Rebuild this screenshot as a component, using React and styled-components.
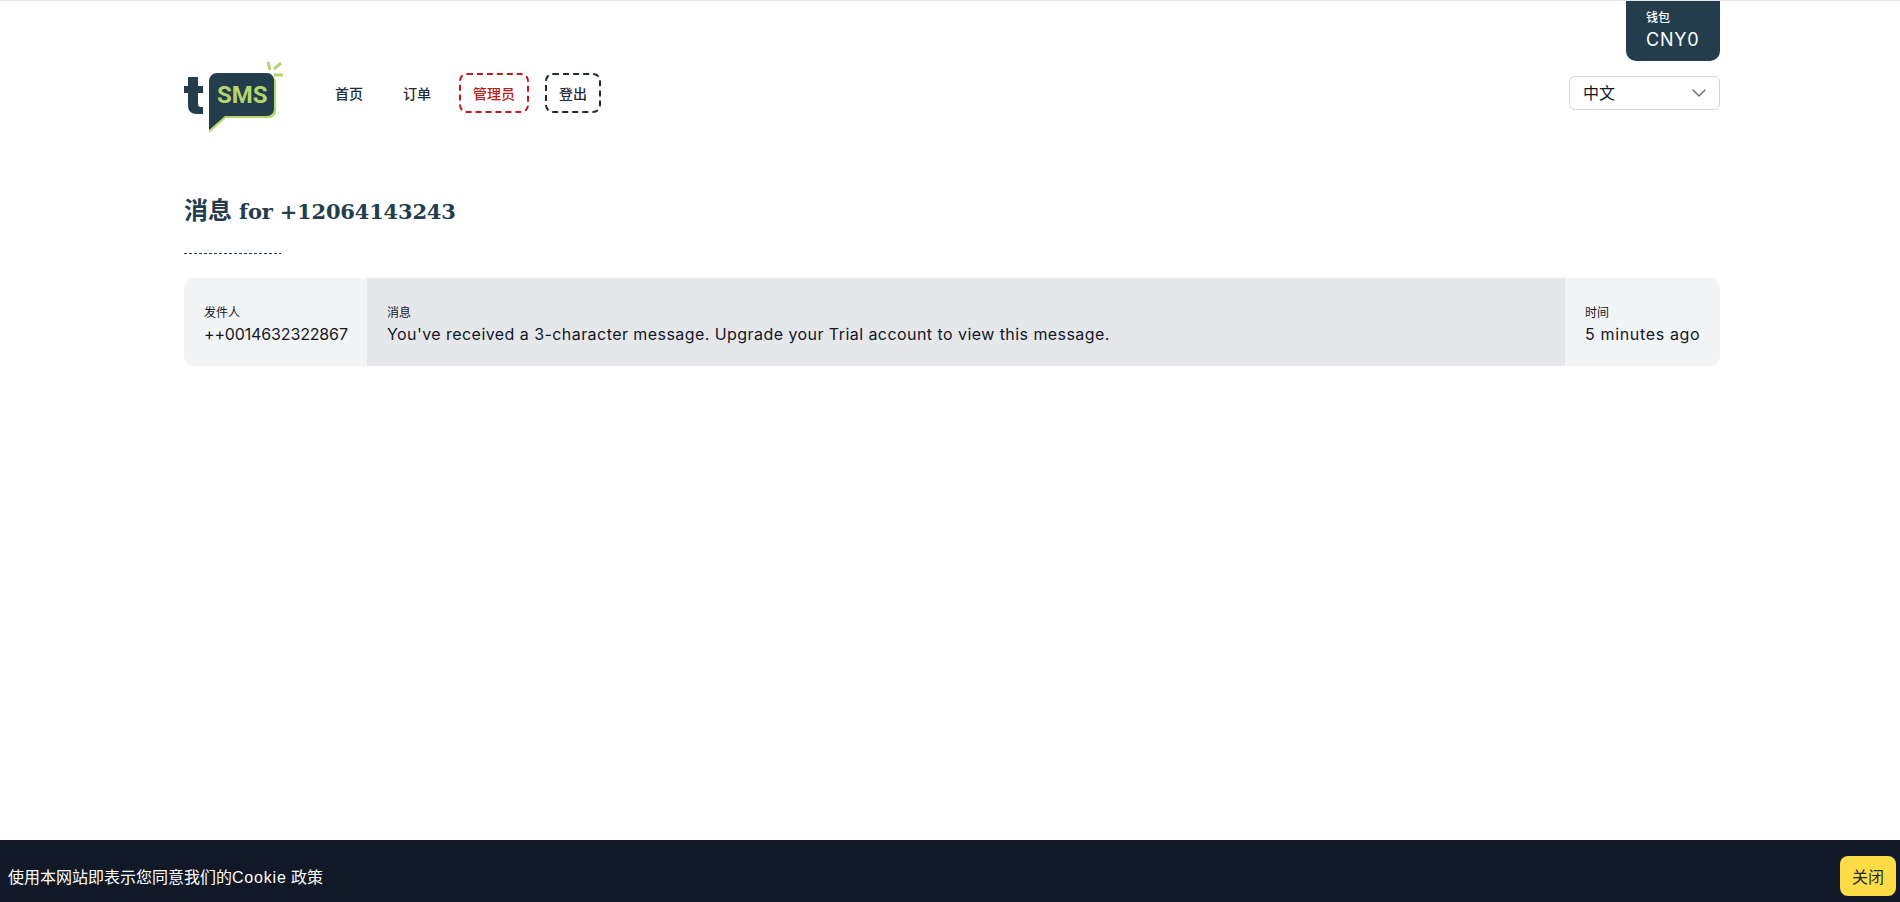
import React from 'react';
import styled, { createGlobalStyle } from 'styled-components';

const GlobalStyle = createGlobalStyle`
  html, body { margin: 0; padding: 0; background: #fff; }
  body {
    font-family: Inter, "Noto Sans CJK SC", sans-serif;
    color: #111827;
    border-top: 1px solid #e5e7eb;
  }
`;

const Page = styled.div`
  width: 1536px;
  margin-left: 184px;
`;

const WalletRow = styled.div`
  display: flex;
  justify-content: flex-end;
  height: 59px;
`;

const Wallet = styled.div`
  width: 94px;
  height: 60px;
  box-sizing: border-box;
  padding: 9px 20px;
  background: #233d4d;
  color: #fff;
  border-radius: 0 0 10px 10px;
`;

const WalletLabel = styled.div`
  font-size: 12px;
  line-height: 16px;
  font-weight: 500;
`;

const WalletValue = styled.div`
  font-size: 18px;
  line-height: 28px;
  letter-spacing: 0.8px;
`;

const Header = styled.header`
  display: flex;
  align-items: flex-start;
  justify-content: space-between;
  height: 72px;
`;

const Left = styled.div`
  display: flex;
  align-items: flex-start;
`;

const Nav = styled.nav`
  display: flex;
  align-items: center;
  gap: 16px;
  margin: 13px 0 0 39px;
`;

const NavLink = styled.a`
  box-sizing: border-box;
  height: 40px;
  display: flex;
  align-items: center;
  padding: 0 12px;
  font-size: 14px;
  font-weight: 500;
  border-radius: 8px;
  color: ${(p) => (p.$tone === 'red' ? '#bb1c1c' : '#1f2937')};
  border: ${(p) => (p.$tone === 'red' ? '2px dashed #bb1c1c' : p.$tone ? '2px dashed #1f2937' : '0')};
`;

const LangSelect = styled.div`
  width: 151px;
  height: 34px;
  box-sizing: border-box;
  margin-top: 16px;
  padding: 0 12px 2px 13px;
  display: flex;
  align-items: center;
  justify-content: space-between;
  border: 1px solid #d1d5db;
  border-radius: 6px;
  font-size: 16px;
  color: #111827;
`;

const Title = styled.h1`
  height: 32px;
  margin: 63px 0 0;
  font-family: "DejaVu Serif", "Noto Sans CJK SC", serif;
  font-size: 21px;
  line-height: 32px;
  font-weight: 700;
  letter-spacing: -0.2px;
  color: #233d4d;
`;

const TitleCjk = styled.span`
  font-size: 24px;
  letter-spacing: 0;
`;

const Rule = styled.div`
  width: 97px;
  height: 1px;
  margin-top: 26px;
  background: repeating-linear-gradient(90deg, #233d4d 0 3px, transparent 3px 5px);
`;

const Table = styled.div`
  display: grid;
  grid-template-columns: 183px 1fr 155px;
  height: 88px;
  margin-top: 24px;
  border-radius: 10px;
  overflow: hidden;
`;

const Cell = styled.div`
  padding: 27px 20px 0;
  background: ${(p) => (p.$dark ? '#e5e7eb' : '#f3f4f6')};
`;

const CellLabel = styled.div`
  font-size: 12px;
  line-height: 16px;
  margin-bottom: 1px;
`;

const CellValue = styled.div`
  font-size: 16px;
  line-height: 24px;
  white-space: nowrap;
  letter-spacing: ${(p) => p.$spacing}px;
`;

const CookieBar = styled.div`
  position: fixed;
  left: 0;
  right: 0;
  bottom: 0;
  height: 62px;
  box-sizing: border-box;
  padding: 16px 4px 6px 8px;
  display: flex;
  align-items: center;
  justify-content: space-between;
  background: #111827;
  color: #fff;
  font-family: "Liberation Sans", "Noto Sans CJK SC", sans-serif;
  font-size: 16px;
`;

const CookieWord = styled.span`
  letter-spacing: 0.8px;
`;

const CloseButton = styled.button`
  width: 56px;
  height: 40px;
  padding: 0;
  border: 0;
  border-radius: 8px;
  background: #fddc45;
  color: #1f2937;
  font: inherit;
`;

const Logo = () => (
  <svg width="100" height="75" viewBox="0 0 100 75">
    <path d="M4 17h10v9h5v7h-5v10c0 3 1 4 3 4h2v7h-6c-6 0-9-3-9-9V33H0v-7h4z" fill="#233d4d" />
    <path d="M29 15h56a7 7 0 0 1 7 7v29a7 7 0 0 1-7 7H42L25 73z" fill="#b5d56d" />
    <path d="M33 13h50a7 7 0 0 1 7 7v29a7 7 0 0 1-7 7H41L25 70V21a8 8 0 0 1 8-8z" fill="#233d4d" />
    <text x="33" y="43" fontFamily="Roboto, sans-serif" fontWeight="700" fontSize="24" fill="#b5d56d">SMS</text>
    <g stroke="#b5d56d" strokeWidth="3" fill="none">
      <path d="M84 2l2 8" />
      <path d="M97 3l-7 6" />
      <path d="M90 15h9" />
    </g>
  </svg>
);

const Chevron = () => (
  <svg width="16" height="16" viewBox="0 0 16 16" fill="none">
    <path d="M2 6l6 6 6-6" stroke="#6b7280" strokeWidth="1.5" strokeLinecap="round" strokeLinejoin="round" />
  </svg>
);

export default function App() {
  return (
    <>
      <GlobalStyle />
      <Page>
        <WalletRow>
          <Wallet>
            <WalletLabel>钱包</WalletLabel>
            <WalletValue>CNY0</WalletValue>
          </Wallet>
        </WalletRow>
        <Header>
          <Left>
            <Logo />
            <Nav>
              <NavLink>首页</NavLink>
              <NavLink>订单</NavLink>
              <NavLink $tone="red">管理员</NavLink>
              <NavLink $tone="dark">登出</NavLink>
            </Nav>
          </Left>
          <LangSelect>
            中文
            <Chevron />
          </LangSelect>
        </Header>
        <Title><TitleCjk>消息</TitleCjk> for +12064143243</Title>
        <Rule />
        <Table>
          <Cell>
            <CellLabel>发件人</CellLabel>
            <CellValue $spacing={-0.15}>++0014632322867</CellValue>
          </Cell>
          <Cell $dark>
            <CellLabel>消息</CellLabel>
            <CellValue $spacing={0.44}>You've received a 3-character message. Upgrade your Trial account to view this message.</CellValue>
          </Cell>
          <Cell>
            <CellLabel>时间</CellLabel>
            <CellValue $spacing={0.65}>5 minutes ago</CellValue>
          </Cell>
        </Table>
      </Page>
      <CookieBar>
        <span>使用本网站即表示您同意我们的<CookieWord>Cookie</CookieWord> 政策</span>
        <CloseButton>关闭</CloseButton>
      </CookieBar>
    </>
  );
}
